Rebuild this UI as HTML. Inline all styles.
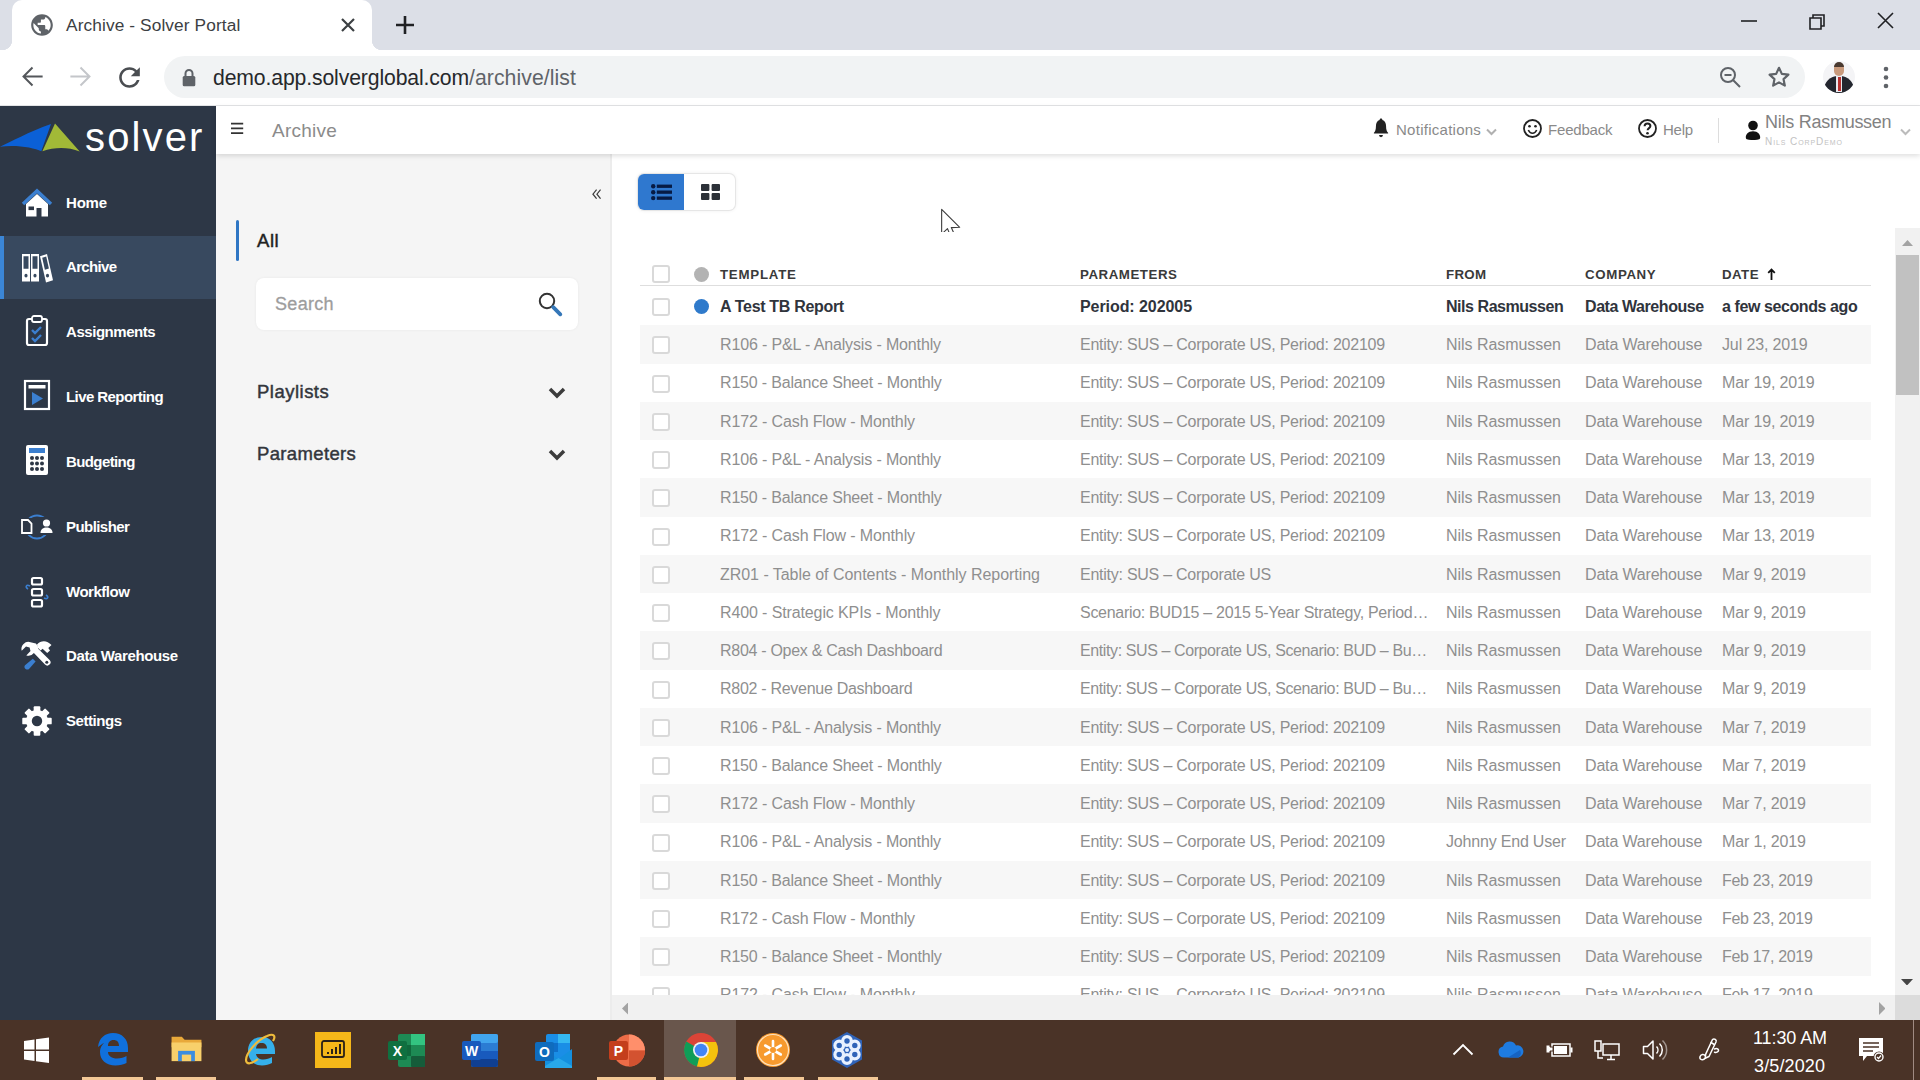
<!DOCTYPE html>
<html lang="en"><head><meta charset="utf-8"><title>Archive - Solver Portal</title>
<style>
*{box-sizing:border-box;margin:0;padding:0}
html,body{width:1920px;height:1080px;overflow:hidden;background:#fff;font-family:"Liberation Sans",sans-serif;color:#333}
.abs{position:absolute}
span,i,div{white-space:nowrap}
/* ---------- browser chrome ---------- */
#tabstrip{position:absolute;left:0;top:0;width:1920px;height:50px;background:#dcdfe7}
#tab{position:absolute;left:12px;top:0;width:360px;height:50px;background:#fff;border-radius:10px 10px 0 0}
#tab:before,#tab:after{content:"";position:absolute;bottom:0;width:10px;height:10px;background:radial-gradient(circle at 0 0,#dcdfe7 10px,#fff 10.5px)}
#tab:before{left:-10px}
#tab:after{right:-10px;background:radial-gradient(circle at 100% 0,#dcdfe7 10px,#fff 10.5px)}
#tabtitle{position:absolute;left:66px;top:13.600px;font-size:17.300px;color:#3c4043;line-height:22px}
#toolbar{position:absolute;left:0;top:50px;width:1920px;height:56px;background:#fff;border-bottom:1px solid #e3e4e6}
#omni{position:absolute;left:164px;top:6px;width:1641px;height:42px;border-radius:21px;background:#f1f3f4}
#url{position:absolute;left:213px;top:14.800px;font-size:21.200px;line-height:26px;color:#26282b}
#url b{font-weight:normal;color:#5f6368}
/* ---------- sidebar ---------- */
#side{position:absolute;left:0;top:106px;width:216px;height:914px;background:#2d3746}
.nav{position:absolute;left:0;width:216px;height:63px}
.nav.act{background:#38495f;border-left:4px solid #3b86d6}
.nav span{position:absolute;left:66px;top:21px;font-size:15px;font-weight:bold;color:#fff;line-height:20px}
.nav svg{position:absolute;left:18px;top:12px;width:38px;height:38px}
/* ---------- app header ---------- */
#hdr{position:absolute;left:216px;top:106px;width:1704px;height:47.5px;background:#fff;box-shadow:0 2px 5px rgba(0,0,0,.13);z-index:5}
#hdr span{position:absolute;color:#8a8a8a;font-size:15px;line-height:20px}
/* ---------- filter panel ---------- */
#flt{position:absolute;left:216px;top:154px;width:394px;height:866px;background:#f5f5f5}
#main{position:absolute;left:610px;top:154px;width:1310px;height:866px;background:#fff;border-left:2px solid #ececec}
/* ---------- table ---------- */
#tbl{position:absolute;left:612px;top:232px;width:1283px;height:763px;overflow:hidden;background:#fff}
.row{position:absolute;left:28px;width:1231px;font-size:16px;color:#8f8f8f}
.row.g{background:#f7f7f7}
.row.b{color:#30343c;font-weight:bold}
.row span{position:absolute;top:50%;margin-top:-9.2px;line-height:20px}
.cb{position:absolute;left:12px;top:50%;margin-top:-8px;width:18px;height:18px;border:2px solid #d9d9d9;border-radius:3px;background:#fff}
.dot{position:absolute;left:54px;top:50%;margin-top:-7.5px;width:15px;height:15px;border-radius:50%;background:#2f7acb}
.c1{left:80px}.c2{left:440px}.c3{left:806px}.c4{left:945px}.c5{left:1082px}
.th{position:absolute;top:36px;font-size:13.3px;font-weight:bold;color:#3a3a3a;line-height:14px}
/* ---------- taskbar ---------- */
#task{position:absolute;left:0;top:1020px;width:1920px;height:60px;background:#4a3327}

</style></head><body>
<div id="tabstrip">
  <div id="tab">
    <svg class="abs" style="left:17px;top:11.5px" width="26" height="26" viewBox="0 0 24 24"><path fill="#5f6368" d="M12 2C6.48 2 2 6.48 2 12s4.48 10 10 10 10-4.480 10-10S17.520 2 12 2zm-1 17.930c-3.950-.490-7-3.850-7-7.930 0-.620.080-1.210.210-1.790L9 15v1c0 1.100.9 2 2 2v1.930zm6.900-2.540c-.260-.810-1-1.390-1.900-1.390h-1v-3c0-.550-.450-1-1-1H8v-2h2c.550 0 1-.450 1-1V7h2c1.100 0 2-.9 2-2v-.410c2.930 1.190 5 4.060 5 7.410 0 2.080-.8 3.970-2.100 5.390z"/></svg>
    <span id="tabtitle" style="left:54px;letter-spacing:0.106px">Archive - Solver Portal</span>
    <svg class="abs" style="left:327px;top:16px" width="18" height="18" viewBox="0 0 18 18"><path d="M3 3L15 15M15 3L3 15" stroke="#3c4043" stroke-width="2.2" fill="none"/></svg>
  </div>
  <svg class="abs" style="left:394px;top:14px" width="22" height="22" viewBox="0 0 22 22"><path d="M11 2V20M2 11H20" stroke="#202124" stroke-width="2.6" fill="none"/></svg>
  <svg class="abs" style="left:1738px;top:10px" width="24" height="24" viewBox="0 0 24 24"><path d="M3 11H19" stroke="#202124" stroke-width="1.6"/></svg>
  <svg class="abs" style="left:1806px;top:10px" width="24" height="24" viewBox="0 0 24 24"><path d="M4 8H15V19H4zM7 8V5H18V16H15" stroke="#202124" stroke-width="1.6" fill="none"/></svg>
  <svg class="abs" style="left:1874px;top:10px" width="24" height="24" viewBox="0 0 24 24"><path d="M4 3L19 18M19 3L4 18" stroke="#202124" stroke-width="1.6" fill="none"/></svg>
</div>
<div id="toolbar">
  <svg class="abs" style="left:19.2px;top:13.4px" width="27" height="27" viewBox="0 0 24 24"><path d="M21 12H4.500M12 4L4 12L12 20" stroke="#54575b" stroke-width="1.750" fill="none"/></svg>
  <svg class="abs" style="left:67.2px;top:13.4px" width="27" height="27" viewBox="0 0 24 24"><path d="M3 12H19.500M12 4L20 12L12 20" stroke="#c4c6ca" stroke-width="1.750" fill="none"/></svg>
  <svg class="abs" style="left:114px;top:11.5px" width="31" height="31" viewBox="0 0 24 24"><path fill="#4a4d51" d="M17.650 6.350C16.200 4.900 14.210 4 12 4c-4.420 0-7.990 3.580-7.990 8s3.570 8 7.990 8c3.730 0 6.840-2.550 7.730-6h-2.080c-.820 2.330-3.040 4-5.650 4-3.310 0-6-2.690-6-6s2.690-6 6-6c1.660 0 3.140.690 4.220 1.780L13 11h7V4l-2.350 2.350z"/></svg>
  <div id="omni"></div>
  <svg class="abs" style="left:179.200px;top:17px" width="20" height="22" viewBox="0 0 20 22"><rect fill="#5f6368" x="3.700" y="9" width="12.600" height="10.300" rx="1.500"/><path d="M6.500 9V6.500a3.500 3.500 0 0 1 7 0V9" stroke="#5f6368" stroke-width="2" fill="none"/></svg>
  <span id="url"><span style="letter-spacing:-0.127px">demo.app.solverglobal.com</span><b style="letter-spacing:0.083px">/archive/list</b></span>
  <svg class="abs" style="left:1717px;top:14px" width="26" height="26" viewBox="0 0 26 26"><circle cx="11" cy="11" r="7" stroke="#5f6368" stroke-width="2" fill="none"/><path d="M16 16L23 23M7.500 11H14.500" stroke="#5f6368" stroke-width="2" fill="none"/></svg>
  <svg class="abs" style="left:1766px;top:14px" width="26" height="26" viewBox="0 0 24 24"><path d="M12 3.500l2.600 5.600 6.100.7-4.500 4.200 1.200 6-5.400-3-5.400 3 1.200-6L3.300 9.800l6.100-.7z" stroke="#5f6368" stroke-width="2" fill="none" stroke-linejoin="round"/></svg>
  <div class="abs" style="left:1823px;top:11px;width:32px;height:32px;border-radius:50%;overflow:hidden;background:#f4f4f6">
    <div class="abs" style="left:1px;top:15px;width:30px;height:22px;border-radius:14px 14px 0 0;background:#23262e"></div>
    <div class="abs" style="left:13px;top:14px;width:6px;height:17px;background:#e9e9ee"></div>
    <div class="abs" style="left:15px;top:16px;width:3px;height:14px;background:#b8312f"></div>
    <div class="abs" style="left:11px;top:2px;width:10px;height:13px;border-radius:5px;background:#c99a7c"></div>
    <div class="abs" style="left:11px;top:1px;width:10px;height:5px;border-radius:5px 5px 0 0;background:#4a3a30"></div>
  </div>
  <svg class="abs" style="left:1882px;top:15px" width="8" height="26" viewBox="0 0 8 26"><circle cx="4" cy="4" r="2.300" fill="#5f6368"/><circle cx="4" cy="12.500" r="2.300" fill="#5f6368"/><circle cx="4" cy="21" r="2.300" fill="#5f6368"/></svg>
</div>

<div id="side">
  <svg class="abs" style="left:0;top:0" width="84" height="50" viewBox="0 0 84 50"><path d="M0 40.700C12 35.500 28 26 51 18L41.300 45.300C34 41.500 16 38.500 0 40.700z" fill="#0b60d6"/><path d="M55 17.500L79.700 45.500C68 41 55 41 42.400 45.300z" fill="#a2b937"/></svg>
  <span class="abs" id="logo" style="left:85px;top:8.200px;font-size:40px;line-height:46px;color:#fff;letter-spacing:2.145px">solver</span>
  <div class="nav" style="top:65.50px"><svg viewBox="0 0 38 38"><path d="M5 20L19 7L33 20" stroke="#3b7fd0" stroke-width="3.500" fill="none"/><path d="M8 20L19 10L30 20V32.500H23.500V24H18.500V32.500H8z" fill="#fff"/><rect x="10.500" y="22.500" width="5.500" height="3.600" fill="#2d3746"/></svg><span style="letter-spacing:-0.196px">Home</span></div>
  <div class="nav act" style="top:130.25px"><svg viewBox="0 0 38 38" style="left:14px;top:9.300px;height:43.400px" preserveAspectRatio="none"><path d="M4 7h8v24H4zM13 7h8v24h-8z" fill="#fff"/><path d="M22 9l7-2 6 23-7 2z" fill="#fff"/><path d="M5.500 9h5v11h-5zM14.500 9h5v11h-5z" fill="#38495f"/><path d="M24.200 10.300l4-1.100 2.700 10.400-4 1.100z" fill="#38495f"/><circle cx="8" cy="26" r="1.600" fill="#38495f"/><circle cx="17" cy="26" r="1.600" fill="#38495f"/><circle cx="29.500" cy="26" r="1.600" fill="#38495f"/></svg><span style="left:62px;letter-spacing:-0.666px">Archive</span></div>
  <div class="nav" style="top:195.00px"><svg viewBox="0 0 38 38" style="top:9.500px"><rect x="9" y="8" width="20" height="26" rx="2" stroke="#fff" stroke-width="2.200" fill="none"/><rect x="14" y="5" width="10" height="6" rx="2" fill="#2d3746" stroke="#fff" stroke-width="1.800"/><path d="M14 19l3 3 6-6M14 27l3 3 6-6" stroke="#3b7fd0" stroke-width="2.400" fill="none"/></svg><span style="letter-spacing:-0.448px">Assignments</span></div>
  <div class="nav" style="top:259.75px"><svg viewBox="0 0 38 38" style="top:10.500px"><rect x="7" y="5" width="24" height="28" stroke="#fff" stroke-width="2.200" fill="none"/><rect x="10.500" y="9" width="17" height="3.500" fill="#fff"/><path d="M14 16l11 6.500-11 6.500z" fill="#3b7fd0"/></svg><span style="letter-spacing:-0.572px">Live Reporting</span></div>
  <div class="nav" style="top:324.50px"><svg viewBox="0 0 38 38" style="top:10.500px"><rect x="8" y="4" width="22" height="30" rx="2" fill="#fff"/><rect x="11" y="7" width="16" height="5" fill="#3b7fd0"/><g fill="#2d3746"><circle cx="14" cy="17" r="2"/><circle cx="19" cy="17" r="2"/><circle cx="24" cy="17" r="2"/><circle cx="14" cy="22.500" r="2"/><circle cx="19" cy="22.500" r="2"/><circle cx="24" cy="22.500" r="2"/><circle cx="14" cy="28" r="2"/><circle cx="19" cy="28" r="2"/><circle cx="24" cy="28" r="2"/></g></svg><span style="letter-spacing:-0.607px">Budgeting</span></div>
  <div class="nav" style="top:390.25px"><svg viewBox="0 0 38 38"><circle cx="19" cy="19" r="11.500" stroke="#3b7fd0" stroke-width="1.800" fill="none"/><rect x="1" y="10" width="14" height="17" fill="#2d3746"/><rect x="22" y="9" width="14" height="18" fill="#2d3746"/><path d="M4 12h6l3.500 3.500V25H4z" stroke="#fff" stroke-width="1.800" fill="none"/><circle cx="28.500" cy="15" r="3.600" fill="#fff"/><path d="M22.500 25c0-4 3-5.500 6-5.500s6 1.500 6 5.500z" fill="#fff"/></svg><span style="letter-spacing:-0.560px">Publisher</span></div>
  <div class="nav" style="top:454.50px"><svg viewBox="0 0 38 38"><g stroke="#fff" stroke-width="2.200" fill="none"><rect x="14" y="5" width="10" height="6.500" rx="1.500"/><rect x="14" y="16" width="10" height="6.500" rx="1.500"/><rect x="14" y="27" width="10" height="6.500" rx="1.500"/></g><path d="M12 13c-4-2-5 1-2 3M26 25c4 2 5-1 2-3" stroke="#3b7fd0" stroke-width="1.600" fill="none"/></svg><span style="letter-spacing:-0.485px">Workflow</span></div>
  <div class="nav" style="top:519.25px"><svg viewBox="0 0 38 38"><path d="M13.500 4.200a7 7 0 0 0-8.800 8.600l4.300-4.200 3.600.9.900 3.600-4.200 4.300a7 7 0 0 0 7.600-2.300L28 26.500a3.200 3.200 0 0 0 4.600-4.500L21.200 10.800a7 7 0 0 0-2.300-5.200z" fill="#fff" transform="translate(-1 1)"/><circle cx="28.800" cy="25.300" r="1.500" fill="#2d3746"/><path d="M19 7.500c4-4.500 10-4.500 14.500.5l-3.200 3 1.700 2.500-2.800 2.600-4.600-4.400-2 1.800-3-3z" fill="#fff"/><path d="M14.800 21.800l2.800 2.800-6.600 7.400c-2.300 2-6-1.300-4-3.800z" fill="#3b7fd0"/></svg><span style="letter-spacing:-0.369px">Data Warehouse</span></div>
  <div class="nav" style="top:583.80px"><svg viewBox="-1 -1 40 40"><g transform="translate(19 19)"><g fill="#fff"><rect x="-3.500" y="-15.500" width="7" height="31" rx="1"/><rect x="-3.500" y="-15.500" width="7" height="31" rx="1" transform="rotate(45)"/><rect x="-3.500" y="-15.500" width="7" height="31" rx="1" transform="rotate(90)"/><rect x="-3.500" y="-15.500" width="7" height="31" rx="1" transform="rotate(135)"/><circle r="11.500"/></g><circle r="5.500" fill="#2d3746"/></g></svg><span style="letter-spacing:-0.452px">Settings</span></div>
</div>

<div id="hdr">
  <svg class="abs" style="left:15px;top:16px" width="13" height="13" viewBox="0 0 13 13"><path d="M0 1.600H12.200M0 6.400H12.200M0 11.200H12.200" stroke="#333" stroke-width="1.700"/></svg>
  <span style="left:56px;top:12.700px;font-size:19px;line-height:24px;color:#8b8b8b;letter-spacing:0.252px">Archive</span>
  <svg class="abs" style="left:1157px;top:12px" width="16" height="20.500" preserveAspectRatio="none" viewBox="0 0 18 21"><path fill="#222" d="M9 0.500c1 0 1.600.7 1.600 1.600 2.700.8 4.100 3.100 4.100 6.300 0 3.600.8 5.400 2.300 6.600v1H1v-1c1.500-1.200 2.300-3 2.300-6.600 0-3.200 1.400-5.500 4.100-6.300C7.400 1.200 8 .5 9 .5zM6.800 17.500h4.400a2.200 2.200 0 0 1-4.400 0z"/></svg>
  <span style="left:1180px;top:14px;letter-spacing:0.264px">Notifications</span>
  <svg class="abs" style="left:1270px;top:22px" width="11" height="8" viewBox="0 0 11 8"><path d="M1 1.500L5.500 6L10 1.500" stroke="#b0b0b0" stroke-width="2" fill="none"/></svg>
  <svg class="abs" style="left:1306px;top:11.500px" width="21" height="21" viewBox="0 0 21 21"><circle cx="10.500" cy="10.500" r="8.500" stroke="#222" stroke-width="1.800" fill="none"/><circle cx="7.500" cy="8.200" r="1.300" fill="#222"/><circle cx="13.500" cy="8.200" r="1.300" fill="#222"/><path d="M6.300 12c1 2.300 2.600 3.200 4.200 3.200s3.200-.9 4.200-3.200" stroke="#222" stroke-width="1.600" fill="none"/></svg>
  <span style="left:1332px;top:14px;letter-spacing:-0.183px">Feedback</span>
  <svg class="abs" style="left:1421px;top:11.500px" width="21" height="21" viewBox="0 0 21 21"><circle cx="10.500" cy="10.500" r="8.500" stroke="#222" stroke-width="1.800" fill="none"/><path d="M7.600 8.300c0-1.800 1.300-2.800 2.900-2.800s2.900 1 2.900 2.600c0 2-2.800 2.100-2.800 4.200" stroke="#222" stroke-width="2" fill="none"/><circle cx="10.500" cy="15.300" r="1.300" fill="#222"/></svg>
  <span style="left:1447px;top:14px;letter-spacing:-0.246px">Help</span>
  <div class="abs" style="left:1502px;top:12px;width:1px;height:25px;background:#ddd"></div>
  <svg class="abs" style="left:1529px;top:13.500px" width="16" height="20" viewBox="0 0 16 20"><circle cx="8" cy="5.500" r="4.800" fill="#111"/><path d="M1.800 19.300c-2.200-1-1-8 6.200-8s8.400 7 6.200 8c-3 1-9.400 1-12.400 0z" fill="#111"/></svg>
  <span style="left:1549px;top:5.300px;font-size:18px;line-height:22px;color:#828282;letter-spacing:-0.263px">Nils Rasmussen</span>
  <span style="left:1549px;top:29.500px;font-size:10px;line-height:12px;color:#c2c2c2;font-variant:small-caps;letter-spacing:0.914px">Nils CorpDemo</span>
  <svg class="abs" style="left:1684px;top:22px" width="11" height="8" viewBox="0 0 11 8"><path d="M1 1.500L5.500 6L10 1.500" stroke="#bbb" stroke-width="2" fill="none"/></svg>
</div>

<div id="flt">
  <svg class="abs" style="left:375.800px;top:34.800px" width="9.700" height="10.400" viewBox="0 0 11 12"><path d="M5.200 0.800L1 6L5.200 11.200M9.800 0.800L5.600 6L9.800 11.200" stroke="#3c3c3c" stroke-width="1.400" fill="none"/></svg>
  <div class="abs" style="left:19.700px;top:66px;width:3.400px;height:40.800px;background:#2f76c4;border-radius:1.700px"></div>
  <span class="abs" style="left:41px;top:75.700px;font-size:18.500px;line-height:22px;color:#222;font-weight:normal;-webkit-text-stroke:0.45px currentColor;letter-spacing:0.575px">All</span>
  <div class="abs" style="left:40px;top:124px;width:321.500px;height:52px;background:#fff;border-radius:8px;box-shadow:0 0 3px rgba(0,0,0,.06)">
    <span class="abs" style="left:19px;top:15px;font-size:18px;line-height:22px;color:#9d9d9d;-webkit-text-stroke:0.300px currentColor;letter-spacing:0.319px">Search</span>
    <svg class="abs" style="left:280px;top:12px" width="30" height="30" viewBox="0 0 30 30"><circle cx="11" cy="11" r="7.200" stroke="#333" stroke-width="2" fill="none"/><path d="M17.200 17.200L24.300 24.300" stroke="#3577b8" stroke-width="3.800" stroke-linecap="round"/></svg>
  </div>
  <span class="abs" style="left:41px;top:227px;font-size:18.500px;line-height:22px;color:#33363c;font-weight:normal;-webkit-text-stroke:0.45px currentColor;letter-spacing:0.487px">Playlists</span>
  <svg class="abs" style="left:332px;top:233px" width="18" height="12" viewBox="0 0 18 12"><path d="M2 2L9 9L16 2" stroke="#3c3c3c" stroke-width="3.500" fill="none"/></svg>
  <span class="abs" style="left:41px;top:289px;font-size:18.500px;line-height:22px;color:#33363c;font-weight:normal;-webkit-text-stroke:0.45px currentColor;letter-spacing:0.355px">Parameters</span>
  <svg class="abs" style="left:332px;top:295px" width="18" height="12" viewBox="0 0 18 12"><path d="M2 2L9 9L16 2" stroke="#3c3c3c" stroke-width="3.500" fill="none"/></svg>
</div>

<div id="main">
  <div class="abs" style="left:26.200px;top:20px;width:96.700px;height:36px;border-radius:6px;background:#fff;box-shadow:0 0 0 1px #e6e6e6,0 0 4px rgba(0,0,0,.10);overflow:hidden">
    <div class="abs" style="left:0;top:0;width:45.800px;height:36px;background:#2f78cf"></div>
    <svg class="abs" style="left:12.800px;top:10.300px" width="21.500" height="16.500" viewBox="0 0 21.500 16.500"><g fill="#071b45"><circle cx="2.200" cy="2.300" r="2.200"/><circle cx="2.200" cy="8.200" r="2.200"/><circle cx="2.200" cy="14.100" r="2.200"/><rect x="5.800" y="0.600" width="15.500" height="3.300"/><rect x="5.800" y="6.500" width="15.500" height="3.300"/><rect x="5.800" y="12.500" width="15.500" height="3.300"/></g></svg>
    <svg class="abs" style="left:62.800px;top:10px" width="19" height="16" viewBox="0 0 19 16"><g fill="#2c3138"><rect x="0" y="0" width="8.400" height="7.100" rx="1"/><rect x="10.600" y="0" width="8.400" height="7.100" rx="1"/><rect x="0" y="8.900" width="8.400" height="7.100" rx="1"/><rect x="10.600" y="8.900" width="8.400" height="7.100" rx="1"/></g></svg>
  </div>
  <svg class="abs" style="left:328px;top:54px" width="22" height="32" viewBox="0 0 22 32"><path d="M1.650 1.400V26.200L7.500 20.600L11.100 29.500L14.900 27.500L11.300 19.600L19.700 19.300z" fill="#fff" stroke="#3c3c3c" stroke-width="1.100" stroke-linejoin="round"/></svg>
</div>
<div id="tbl">
  <i class="cb" style="left:40px;top:42px;margin-top:-9px"></i>
  <i class="dot" style="left:82px;top:42.500px;background:#b3b3b3"></i>
  <span class="th" style="left:108px;letter-spacing:0.750px">TEMPLATE</span>
  <span class="th" style="left:468px;letter-spacing:0.536px">PARAMETERS</span>
  <span class="th" style="left:834px;letter-spacing:0.298px">FROM</span>
  <span class="th" style="left:973px;letter-spacing:0.618px">COMPANY</span>
  <span class="th" style="left:1110px;letter-spacing:0.452px">DATE</span>
  <svg class="abs" style="left:1155px;top:36px" width="9" height="13" viewBox="0 0 9 13"><path d="M4.500 12V1.800M1.200 4.800L4.500 1.500L7.800 4.800" stroke="#111" stroke-width="1.800" fill="none"/></svg>
  <div class="abs" style="left:28px;top:53px;width:1231px;height:1px;background:#dedede"></div>
<div class="row b" style="top:55.00px;height:38.3px"><i class="cb"></i><i class="dot"></i><span class="c1" style="letter-spacing:-0.316px">A Test TB Report</span><span class="c2" style="letter-spacing:-0.071px">Period: 202005</span><span class="c3" style="letter-spacing:-0.453px">Nils Rasmussen</span><span class="c4" style="letter-spacing:-0.428px">Data Warehouse</span><span class="c5" style="letter-spacing:-0.410px">a few seconds ago</span></div>
<div class="row g" style="top:93.30px;height:38.25px"><i class="cb"></i><span class="c1" style="letter-spacing:-0.140px">R106 - P&amp;L - Analysis - Monthly</span><span class="c2" style="letter-spacing:-0.237px">Entity: SUS – Corporate US, Period: 202109</span><span class="c3" style="letter-spacing:-0.044px">Nils Rasmussen</span><span class="c4" style="letter-spacing:-0.168px">Data Warehouse</span><span class="c5" style="letter-spacing:-0.129px">Jul 23, 2019</span></div>
<div class="row" style="top:131.55px;height:38.25px"><i class="cb"></i><span class="c1" style="letter-spacing:-0.173px">R150 - Balance Sheet - Monthly</span><span class="c2" style="letter-spacing:-0.237px">Entity: SUS – Corporate US, Period: 202109</span><span class="c3" style="letter-spacing:-0.044px">Nils Rasmussen</span><span class="c4" style="letter-spacing:-0.168px">Data Warehouse</span><span class="c5" style="letter-spacing:-0.146px">Mar 19, 2019</span></div>
<div class="row g" style="top:169.80px;height:38.25px"><i class="cb"></i><span class="c1" style="letter-spacing:-0.129px">R172 - Cash Flow - Monthly</span><span class="c2" style="letter-spacing:-0.237px">Entity: SUS – Corporate US, Period: 202109</span><span class="c3" style="letter-spacing:-0.044px">Nils Rasmussen</span><span class="c4" style="letter-spacing:-0.168px">Data Warehouse</span><span class="c5" style="letter-spacing:-0.146px">Mar 19, 2019</span></div>
<div class="row" style="top:208.05px;height:38.25px"><i class="cb"></i><span class="c1" style="letter-spacing:-0.140px">R106 - P&amp;L - Analysis - Monthly</span><span class="c2" style="letter-spacing:-0.237px">Entity: SUS – Corporate US, Period: 202109</span><span class="c3" style="letter-spacing:-0.044px">Nils Rasmussen</span><span class="c4" style="letter-spacing:-0.168px">Data Warehouse</span><span class="c5" style="letter-spacing:-0.146px">Mar 13, 2019</span></div>
<div class="row g" style="top:246.30px;height:38.25px"><i class="cb"></i><span class="c1" style="letter-spacing:-0.173px">R150 - Balance Sheet - Monthly</span><span class="c2" style="letter-spacing:-0.237px">Entity: SUS – Corporate US, Period: 202109</span><span class="c3" style="letter-spacing:-0.044px">Nils Rasmussen</span><span class="c4" style="letter-spacing:-0.168px">Data Warehouse</span><span class="c5" style="letter-spacing:-0.146px">Mar 13, 2019</span></div>
<div class="row" style="top:284.55px;height:38.25px"><i class="cb"></i><span class="c1" style="letter-spacing:-0.129px">R172 - Cash Flow - Monthly</span><span class="c2" style="letter-spacing:-0.237px">Entity: SUS – Corporate US, Period: 202109</span><span class="c3" style="letter-spacing:-0.044px">Nils Rasmussen</span><span class="c4" style="letter-spacing:-0.168px">Data Warehouse</span><span class="c5" style="letter-spacing:-0.146px">Mar 13, 2019</span></div>
<div class="row g" style="top:322.80px;height:38.25px"><i class="cb"></i><span class="c1" style="letter-spacing:-0.038px">ZR01 - Table of Contents - Monthly Reporting</span><span class="c2" style="letter-spacing:-0.252px">Entity: SUS – Corporate US</span><span class="c3" style="letter-spacing:-0.044px">Nils Rasmussen</span><span class="c4" style="letter-spacing:-0.168px">Data Warehouse</span><span class="c5" style="letter-spacing:-0.151px">Mar 9, 2019</span></div>
<div class="row" style="top:361.05px;height:38.25px"><i class="cb"></i><span class="c1" style="letter-spacing:-0.118px">R400 - Strategic KPIs - Monthly</span><span class="c2" style="letter-spacing:-0.294px">Scenario: BUD15 – 2015 5-Year Strategy, Period…</span><span class="c3" style="letter-spacing:-0.044px">Nils Rasmussen</span><span class="c4" style="letter-spacing:-0.168px">Data Warehouse</span><span class="c5" style="letter-spacing:-0.151px">Mar 9, 2019</span></div>
<div class="row g" style="top:399.30px;height:38.25px"><i class="cb"></i><span class="c1" style="letter-spacing:-0.289px">R804 - Opex &amp; Cash Dashboard</span><span class="c2" style="letter-spacing:-0.398px">Entity: SUS – Corporate US, Scenario: BUD – Bu…</span><span class="c3" style="letter-spacing:-0.044px">Nils Rasmussen</span><span class="c4" style="letter-spacing:-0.168px">Data Warehouse</span><span class="c5" style="letter-spacing:-0.151px">Mar 9, 2019</span></div>
<div class="row" style="top:437.55px;height:38.25px"><i class="cb"></i><span class="c1" style="letter-spacing:-0.287px">R802 - Revenue Dashboard</span><span class="c2" style="letter-spacing:-0.398px">Entity: SUS – Corporate US, Scenario: BUD – Bu…</span><span class="c3" style="letter-spacing:-0.044px">Nils Rasmussen</span><span class="c4" style="letter-spacing:-0.168px">Data Warehouse</span><span class="c5" style="letter-spacing:-0.151px">Mar 9, 2019</span></div>
<div class="row g" style="top:475.80px;height:38.25px"><i class="cb"></i><span class="c1" style="letter-spacing:-0.140px">R106 - P&amp;L - Analysis - Monthly</span><span class="c2" style="letter-spacing:-0.237px">Entity: SUS – Corporate US, Period: 202109</span><span class="c3" style="letter-spacing:-0.044px">Nils Rasmussen</span><span class="c4" style="letter-spacing:-0.168px">Data Warehouse</span><span class="c5" style="letter-spacing:-0.151px">Mar 7, 2019</span></div>
<div class="row" style="top:514.05px;height:38.25px"><i class="cb"></i><span class="c1" style="letter-spacing:-0.173px">R150 - Balance Sheet - Monthly</span><span class="c2" style="letter-spacing:-0.237px">Entity: SUS – Corporate US, Period: 202109</span><span class="c3" style="letter-spacing:-0.044px">Nils Rasmussen</span><span class="c4" style="letter-spacing:-0.168px">Data Warehouse</span><span class="c5" style="letter-spacing:-0.151px">Mar 7, 2019</span></div>
<div class="row g" style="top:552.30px;height:38.25px"><i class="cb"></i><span class="c1" style="letter-spacing:-0.129px">R172 - Cash Flow - Monthly</span><span class="c2" style="letter-spacing:-0.237px">Entity: SUS – Corporate US, Period: 202109</span><span class="c3" style="letter-spacing:-0.044px">Nils Rasmussen</span><span class="c4" style="letter-spacing:-0.168px">Data Warehouse</span><span class="c5" style="letter-spacing:-0.151px">Mar 7, 2019</span></div>
<div class="row" style="top:590.55px;height:38.25px"><i class="cb"></i><span class="c1" style="letter-spacing:-0.140px">R106 - P&amp;L - Analysis - Monthly</span><span class="c2" style="letter-spacing:-0.237px">Entity: SUS – Corporate US, Period: 202109</span><span class="c3" style="letter-spacing:-0.189px">Johnny End User</span><span class="c4" style="letter-spacing:-0.168px">Data Warehouse</span><span class="c5" style="letter-spacing:-0.151px">Mar 1, 2019</span></div>
<div class="row g" style="top:628.80px;height:38.25px"><i class="cb"></i><span class="c1" style="letter-spacing:-0.173px">R150 - Balance Sheet - Monthly</span><span class="c2" style="letter-spacing:-0.237px">Entity: SUS – Corporate US, Period: 202109</span><span class="c3" style="letter-spacing:-0.044px">Nils Rasmussen</span><span class="c4" style="letter-spacing:-0.168px">Data Warehouse</span><span class="c5" style="letter-spacing:-0.313px">Feb 23, 2019</span></div>
<div class="row" style="top:667.05px;height:38.25px"><i class="cb"></i><span class="c1" style="letter-spacing:-0.129px">R172 - Cash Flow - Monthly</span><span class="c2" style="letter-spacing:-0.237px">Entity: SUS – Corporate US, Period: 202109</span><span class="c3" style="letter-spacing:-0.044px">Nils Rasmussen</span><span class="c4" style="letter-spacing:-0.168px">Data Warehouse</span><span class="c5" style="letter-spacing:-0.313px">Feb 23, 2019</span></div>
<div class="row g" style="top:705.30px;height:38.25px"><i class="cb"></i><span class="c1" style="letter-spacing:-0.173px">R150 - Balance Sheet - Monthly</span><span class="c2" style="letter-spacing:-0.237px">Entity: SUS – Corporate US, Period: 202109</span><span class="c3" style="letter-spacing:-0.044px">Nils Rasmussen</span><span class="c4" style="letter-spacing:-0.168px">Data Warehouse</span><span class="c5" style="letter-spacing:-0.313px">Feb 17, 2019</span></div>
<div class="row" style="top:743.55px;height:38.25px"><i class="cb"></i><span class="c1" style="letter-spacing:-0.129px">R172 - Cash Flow - Monthly</span><span class="c2" style="letter-spacing:-0.237px">Entity: SUS – Corporate US, Period: 202109</span><span class="c3" style="letter-spacing:-0.044px">Nils Rasmussen</span><span class="c4" style="letter-spacing:-0.168px">Data Warehouse</span><span class="c5" style="letter-spacing:-0.313px">Feb 17, 2019</span></div>
</div>
<div class="abs" style="left:1895px;top:228px;width:25px;height:767px;background:#f1f1f1">
  <svg class="abs" style="left:6.500px;top:12px" width="11" height="6" viewBox="0 0 11 6"><path d="M0 6L5.500 0L11 6z" fill="#a3a3a3"/></svg>
  <div class="abs" style="left:1px;top:27px;width:22.500px;height:139.500px;background:#c1c1c1"></div>
  <svg class="abs" style="left:6px;top:750.500px" width="12" height="6.500" viewBox="0 0 12 6.500"><path d="M0 0L6 6.500L12 0z" fill="#454545"/></svg>
</div>
<div class="abs" style="left:612px;top:995px;width:1283px;height:25px;background:#f1f1f1">
  <svg class="abs" style="left:9.500px;top:6.500px" width="6.500" height="13" viewBox="0 0 6.500 13"><path d="M6.500 0L0 6.500L6.500 13z" fill="#a3a3a3"/></svg>
  <svg class="abs" style="left:1266.500px;top:6.500px" width="6.500" height="13" viewBox="0 0 6.500 13"><path d="M0 0L6.500 6.500L0 13z" fill="#a3a3a3"/></svg>
</div>
<div class="abs" style="left:1895px;top:995px;width:25px;height:25px;background:#dcdcdc"></div>

<div id="task">
  <!-- running indicators -->
  <div class="abs" style="left:82px;top:57px;width:61px;height:3px;background:#f3c896"></div>
  <div class="abs" style="left:156px;top:57px;width:60px;height:3px;background:#f3c896"></div>
  <div class="abs" style="left:597px;top:57px;width:59px;height:3px;background:#f3c896"></div>
  <div class="abs" style="left:664px;top:0;width:72px;height:60px;background:#69564c"></div>
  <div class="abs" style="left:664px;top:57px;width:72px;height:3px;background:#f3c896"></div>
  <div class="abs" style="left:744px;top:57px;width:60px;height:3px;background:#f3c896"></div>
  <div class="abs" style="left:818px;top:57px;width:60px;height:3px;background:#f3c896"></div>
  <div class="abs" style="left:1912.500px;top:0;width:1.500px;height:60px;background:#a08b82"></div>
  <!-- windows -->
  <svg class="abs" style="left:24px;top:17px" width="25" height="26" viewBox="0 0 25 26"><path fill="#fff" d="M0 4L10.500 2.500V12.500H0zM12 2.300L25 0.500V12.500H12zM0 14H10.500V24L0 22.500zM12 14H25V26L12 24.200z"/></svg>
  <!-- edge -->
  <svg class="abs" style="left:96.500px;top:12px" width="32" height="34" viewBox="0 0 32 34"><path fill="#1070dc" d="M1 15C2 6 8 1 16 1c9 0 15 6 15 15v4H11c0 4 4 6.500 9 6.500 4 0 7-1 9.500-2.500v7C26.500 32.500 23 33.500 18.500 33.500 9 33.500 3 28 3 20c0-5 3-9 7-11-3 1.500-6 3.500-9 6zM11 14h11c0-4-2-6-5.500-6S11 10.500 11 14z"/></svg>
  <!-- explorer -->
  <svg class="abs" style="left:169.500px;top:15px" width="33" height="28" viewBox="0 0 34 30"><path fill="#e9a93a" d="M1 2h11l3 3h18v8H1z"/><path fill="#f8d06b" d="M1 8h32v20H1z"/><path fill="#3b8de0" d="M8 17h18v11H8z"/><path fill="#f8d06b" d="M12 21h10v7H12z"/></svg>
  <!-- IE -->
  <svg class="abs" style="left:243px;top:12px" width="36" height="36" viewBox="0 0 36 36"><path fill="#35b0ea" d="M5 19C5 10 11 5 19 5c8 0 13 6 13 14v3H13c.5 3.500 3.500 5.500 7.500 5.500 3 0 6-1 8.500-2.500v6c-3 1.500-6 2.500-10 2.500C11 33.500 5 28 5 19zm8-2.500h11c0-3.500-2-5.500-5.500-5.500S13.500 13 13 16.500z"/><path fill="none" stroke="#eebb3c" stroke-width="2.200" d="M30 9c3-5 1-8-6-5C14 8 3 21 3 28c0 5 6 4 12-1"/></svg>
  <!-- power bi -->
  <div class="abs" style="left:315px;top:12px;width:36px;height:36px;background:#f5b719"></div>
  <svg class="abs" style="left:321px;top:20px" width="24" height="20" viewBox="0 0 24 20"><rect x="1" y="1" width="22" height="16" rx="2" stroke="#2a2118" stroke-width="1.800" fill="none"/><path stroke="#2a2118" stroke-width="2" d="M7 14v-2M11 14V9M15 14V7M19 14V4"/></svg>
  <!-- excel -->
  <svg class="abs" style="left:388px;top:14px" width="37" height="33" viewBox="0 0 37 33"><rect x="10" y="0" width="27" height="33" rx="2" fill="#1d8a54"/><rect x="23" y="0" width="14" height="11" fill="#33c481"/><rect x="23" y="22" width="14" height="11" rx="1" fill="#155c3a"/><rect x="10" y="11" width="13" height="11" fill="#10683c"/><rect x="0" y="7" width="19" height="19" rx="2" fill="#0f7040"/><text x="9.500" y="22" font-family="Liberation Sans, sans-serif" font-weight="bold" font-size="14" fill="#fff" text-anchor="middle">X</text></svg>
  <!-- word -->
  <svg class="abs" style="left:462px;top:14px" width="36" height="33" viewBox="0 0 36 33"><rect x="9" y="0" width="27" height="33" rx="2" fill="#2b7cd3"/><rect x="9" y="0" width="27" height="9" rx="2" fill="#41a5ee"/><rect x="9" y="17" width="27" height="8" fill="#185abd"/><rect x="9" y="25" width="27" height="8" rx="2" fill="#103f91"/><rect x="0" y="7" width="19" height="19" rx="2" fill="#185abd"/><text x="9.500" y="22" font-family="Liberation Sans, sans-serif" font-weight="bold" font-size="14" fill="#fff" text-anchor="middle">W</text></svg>
  <!-- outlook -->
  <svg class="abs" style="left:535px;top:14px" width="37" height="34" viewBox="0 0 37 34"><rect x="11" y="0" width="24" height="26" rx="2" fill="#1a8ee6"/><rect x="23" y="0" width="12" height="9" fill="#35b8f1"/><rect x="11" y="9" width="12" height="9" fill="#0f6fc9"/><path d="M10 15l13.500 10L37 15v17a2 2 0 0 1-2 2H12a2 2 0 0 1-2-2z" fill="#1490df"/><path d="M10 32l13.500-8L37 32v2H10z" fill="#28a8ea"/><rect x="0" y="8" width="19" height="19" rx="2" fill="#0f6cbd"/><text x="9.500" y="22.500" font-family="Liberation Sans, sans-serif" font-weight="bold" font-size="14" fill="#fff" text-anchor="middle">O</text></svg>
  <!-- powerpoint -->
  <svg class="abs" style="left:609px;top:13px" width="36" height="35" viewBox="0 0 36 35"><circle cx="20" cy="17.500" r="16" fill="#ed6c47"/><path d="M20 1.500A16 16 0 0 1 36 17.500H20z" fill="#ff8f6b"/><path d="M20 33.500A16 16 0 0 0 36 17.500H20z" fill="#d35230"/><rect x="0" y="8" width="19" height="19" rx="2" fill="#c43e1c"/><text x="9.500" y="22.500" font-family="Liberation Sans, sans-serif" font-weight="bold" font-size="14" fill="#fff" text-anchor="middle">P</text></svg>
  <!-- chrome -->
  <svg class="abs" style="left:683px;top:12px" width="36" height="36" viewBox="0 0 36 36"><circle cx="18" cy="18" r="17" fill="#db4437"/><path d="M18 18L3.300 9.500A17 17 0 0 0 14 34.500L21 22z" fill="#0f9d58"/><path d="M18 18L14 34.500A17 17 0 0 0 33 10H18z" fill="#f4c20d"/><circle cx="18" cy="18" r="8" fill="#f1f1f1"/><circle cx="18" cy="18" r="6.300" fill="#4285f4"/></svg>
  <!-- orange app -->
  <svg class="abs" style="left:755px;top:12px" width="36" height="36" viewBox="0 0 36 36"><circle cx="18" cy="18" r="17" fill="#f79a2e"/><circle cx="18" cy="18" r="15.500" fill="none" stroke="#fde3c0" stroke-width="1.200"/><g stroke="#fff" stroke-width="2.600" stroke-linecap="round"><path d="M18 9v18M10.200 13.500l15.600 9M10.200 22.500l15.600-9"/></g><circle cx="18" cy="18" r="3" fill="#f79a2e"/></svg>
  <!-- blue flower app -->
  <svg class="abs" style="left:829px;top:11px" width="36" height="38" viewBox="0 0 36 38"><path d="M18 1l15 8.500v19L18 37 3 28.500v-19z" fill="#2f63b8"/><g fill="none" stroke="#e8f1ff" stroke-width="3.200"><circle cx="18" cy="10" r="4.300"/><circle cx="25.800" cy="14.500" r="4.300"/><circle cx="25.800" cy="23.500" r="4.300"/><circle cx="18" cy="28" r="4.300"/><circle cx="10.200" cy="23.500" r="4.300"/><circle cx="10.200" cy="14.500" r="4.300"/></g><circle cx="18" cy="19" r="2" fill="#e8f1ff"/></svg>
  <!-- tray -->
  <svg class="abs" style="left:1452px;top:23px" width="22" height="13" viewBox="0 0 22 13"><path d="M1.500 11.500L11 2L20.500 11.500" stroke="#fff" stroke-width="1.800" fill="none"/></svg>
  <svg class="abs" style="left:1498px;top:21px" width="26" height="17" viewBox="0 0 26 17"><path d="M6 16.500a5.500 5.500 0 0 1-1-10.900A7 7 0 0 1 18 4.500a6 6 0 0 1 2.500 12z" fill="#1e7be0"/><path d="M10 16.500L22 9a6 6 0 0 1-1.500 7.500z" fill="#1663c2"/></svg>
  <svg class="abs" style="left:1546px;top:21px" width="27" height="17" viewBox="0 0 27 17"><rect x="6" y="3" width="18" height="12" stroke="#fff" stroke-width="1.500" fill="none"/><rect x="24.500" y="6.500" width="2" height="5" fill="#fff"/><rect x="8" y="5" width="13" height="8" fill="#fff"/><path d="M0 4h4v2h3v4H4v2H0z" fill="#fff" stroke="#4a3327" stroke-width="1"/></svg>
  <svg class="abs" style="left:1594px;top:20px" width="26" height="21" viewBox="0 0 26 21"><path d="M1 1h6v10H1zM4 11v7h5" stroke="#fff" stroke-width="1.500" fill="none"/><rect x="9" y="4" width="16" height="11" stroke="#fff" stroke-width="1.500" fill="none"/><path d="M13 19.500h8M17 15v4.500" stroke="#fff" stroke-width="1.500"/></svg>
  <svg class="abs" style="left:1642px;top:19px" width="26" height="22" viewBox="0 0 26 22"><path d="M1.500 7.500h4L11 2v18l-5.500-5.500h-4z" stroke="#fff" stroke-width="1.500" fill="none" stroke-linejoin="round"/><path d="M14.500 7.500a5 5 0 0 1 0 7M17.500 4.500a9 9 0 0 1 0 13" stroke="#fff" stroke-width="1.500" fill="none"/><path d="M20.500 1.500a13 13 0 0 1 0 19" stroke="#9f938d" stroke-width="1.500" fill="none"/></svg>
  <svg class="abs" style="left:1695px;top:16px" width="28" height="28" viewBox="0 0 28 28"><g stroke="#fff" stroke-width="1.500" fill="none" stroke-linejoin="round" stroke-linecap="round"><path d="M17.500 3.500c1.800-1.500 4.500.3 3.500 2.500L14 20.500l-3.800 1.800.5-4.200z"/><path d="M16 6.500l3.300 2"/><path d="M10.200 22.300c-2 2.500-6 1.500-5.200-1.500.7-2.500 4-3 5.300-1"/><path d="M19.500 13c3-1.200 5 .8 3.500 2.500-.8.900-2.300 1-3.500.7"/></g></svg>
  <span class="abs" style="left:1753px;top:6.800px;font-size:18px;line-height:22px;color:#fff;letter-spacing:-0.096px">11:30 AM</span>
  <span class="abs" style="left:1754px;top:34.800px;font-size:18px;line-height:22px;color:#fff;letter-spacing:0.123px">3/5/2020</span>
  <svg class="abs" style="left:1858px;top:17px" width="28" height="27" viewBox="0 0 28 27"><path d="M1 1h24v18H9l-4 5v-5H1z" fill="#fff"/><path d="M5 6h16M5 10h16M5 14h10" stroke="#4a3327" stroke-width="1.500"/><circle cx="21" cy="20" r="5.500" fill="#4a3327"/><circle cx="21" cy="20" r="4" fill="none" stroke="#fff" stroke-width="1.400"/><path d="M19 20l1.500 1.500 2.500-3" stroke="#fff" stroke-width="1.200" fill="none"/></svg>
</div>

</body></html>
